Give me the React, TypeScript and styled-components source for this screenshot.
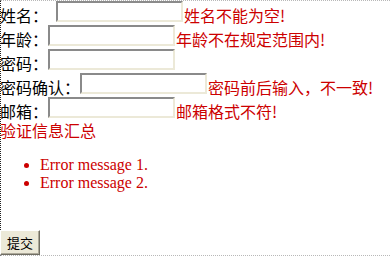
import styled, { createGlobalStyle } from "styled-components";

const GlobalStyle = createGlobalStyle`
  body {
    margin: 0;
    background: #ffffff;
    font-family: "Noto Sans CJK SC", "Liberation Serif", serif;
  }
`;

const Form = styled.form`
  border-top: 1px dotted #b8b8b8;
  border-bottom: 1px dotted #b8b8b8;
  border-left: 1px dotted #202020;
  width: 390px;
  box-sizing: border-box;
`;

const Row = styled.div`
  display: flex;
  align-items: flex-start;
  height: 24px;
  white-space: nowrap;
`;

const Label = styled.span<{ $extra?: number }>`
  font-size: 16px;
  line-height: 16px;
  padding-top: 6px;
  padding-right: ${(p) => p.$extra ?? 0}px;
  color: #000;
  margin-left: -1px;
`;

const TextBox = styled.input`
  box-sizing: border-box;
  width: 127px;
  height: 21px;
  margin: 0;
  padding: 1px 2px;
  background: #fff;
  border: 2px solid;
  border-color: #8a8a8a #ece9d8 #ece9d8 #8a8a8a;
  font-size: 13px;
  outline: none;
`;

const ErrorText = styled.span`
  font-size: 16px;
  line-height: 16px;
  padding-top: 6px;
  padding-left: 1px;
  color: #cc0000;
`;

const Summary = styled.div`
  font-size: 16px;
  line-height: 16px;
  color: #cc0000;
  margin-left: -1px;
  padding-top: 1px;
`;

const ErrorList = styled.ul`
  margin: 18px 0 16px;
  padding-left: 39px;
  color: #cc0000;
  font-family: "Liberation Serif", serif;
  font-size: 16px;
  line-height: 18px;
`;

const Actions = styled.div`
  padding-top: 22px;
  margin-left: -1px;
  display: flex;
`;

const SubmitButton = styled.button`
  width: 40px;
  height: 25px;
  padding: 0;
  background: #ece9d8;
  border: 1px solid;
  border-color: #ffffff #716f64 #716f64 #ffffff;
  box-shadow: inset -1px -1px 0 #aca899;
  font-family: "Noto Sans CJK SC", sans-serif;
  font-size: 13px;
  color: #000;
`;

const fields = [
  { label: "姓名：", extra: 8, type: "text", error: "姓名不能为空!" },
  { label: "年龄：", extra: 0, type: "text", error: "年龄不在规定范围内!" },
  { label: "密码：", extra: 0, type: "password", error: "" },
  { label: "密码确认：", extra: 0, type: "password", error: "密码前后输入，不一致!" },
  { label: "邮箱：", extra: 0, type: "text", error: "邮箱格式不符!" },
];

export default function App() {
  return (
    <>
      <GlobalStyle />
      <Form onSubmit={(e) => e.preventDefault()}>
        {fields.map((f) => (
          <Row key={f.label}>
            <Label $extra={f.extra}>{f.label}</Label>
            <TextBox type={f.type} />
            {f.error && <ErrorText>{f.error}</ErrorText>}
          </Row>
        ))}
        <Summary>验证信息汇总</Summary>
        <ErrorList>
          <li>Error message 1.</li>
          <li>Error message 2.</li>
        </ErrorList>
        <Actions>
          <SubmitButton type="submit">提交</SubmitButton>
        </Actions>
      </Form>
    </>
  );
}
